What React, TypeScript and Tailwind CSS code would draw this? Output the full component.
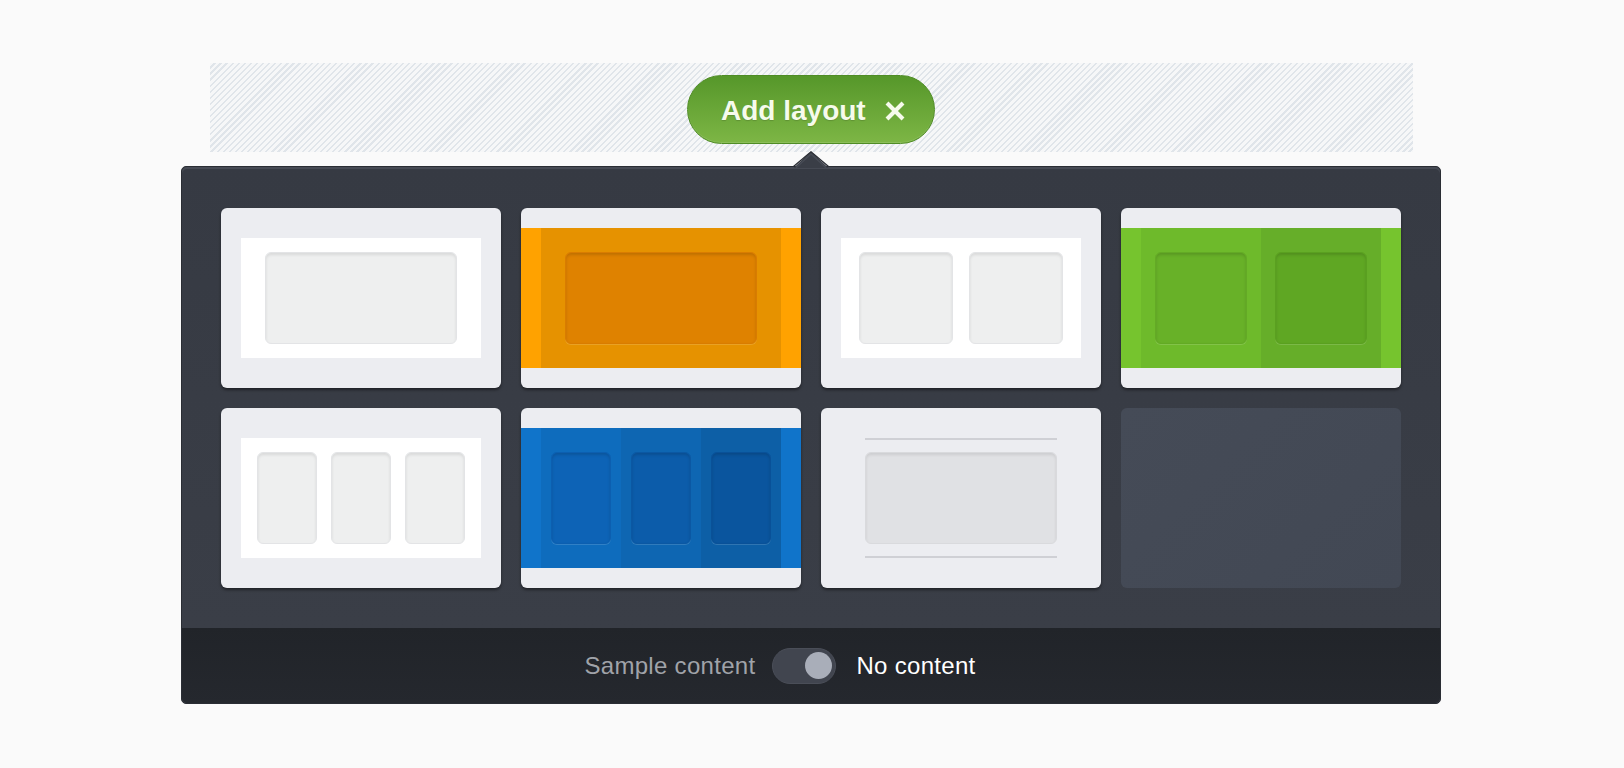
import React from "react";

const cardBase =
  "h-[180px] rounded-[6px] bg-[#ecedf1] overflow-hidden shadow-[0_2px_3px_rgba(0,0,0,0.45)]";

const whiteBox =
  "rounded-[6px] bg-[#eeefef] border border-[#e3e4e6] shadow-[inset_0_2px_3px_rgba(0,0,0,0.09)]";

function SingleWhite() {
  return (
    <div className={cardBase + " pt-[30px] px-5"}>
      <div className="h-[120px] bg-white px-[24px] py-[14px] flex">
        <div className={whiteBox + " flex-1"} />
      </div>
    </div>
  );
}

function TwoWhite() {
  return (
    <div className={cardBase + " pt-[30px] px-5"}>
      <div className="h-[120px] bg-white px-[18px] py-[14px] flex gap-[16px]">
        <div className={whiteBox + " flex-1"} />
        <div className={whiteBox + " flex-1"} />
      </div>
    </div>
  );
}

function ThreeWhite() {
  return (
    <div className={cardBase + " pt-[30px] px-5"}>
      <div className="h-[120px] bg-white px-[16px] py-[14px] flex gap-[14px]">
        <div className={whiteBox + " flex-1"} />
        <div className={whiteBox + " flex-1"} />
        <div className={whiteBox + " flex-1"} />
      </div>
    </div>
  );
}

const colorBox =
  "flex-1 rounded-[6px] shadow-[inset_0_2px_3px_rgba(0,0,0,0.14),0_1px_0_rgba(255,255,255,0.14)]";

function Orange() {
  return (
    <div className={cardBase + " pt-5"}>
      <div className="h-[140px] bg-[#ffa200] px-5 flex">
        <div className="flex-1 bg-[#e69200] px-[24px] py-[24px] flex">
          <div className={colorBox + " bg-[#df8200] border border-[#d97c00]"} />
        </div>
      </div>
    </div>
  );
}

function Green() {
  return (
    <div className={cardBase + " pt-5"}>
      <div className="h-[140px] bg-[#76c42e] px-5 flex">
        <div className="flex-1 bg-[#6eba2b] px-[14px] py-[24px] flex">
          <div className={colorBox + " bg-[#68b128] border border-[#63aa25]"} />
        </div>
        <div className="flex-1 bg-[#66ae29] px-[14px] py-[24px] flex">
          <div className={colorBox + " bg-[#5fa723] border border-[#5aa020]"} />
        </div>
      </div>
    </div>
  );
}

function Blue() {
  return (
    <div className={cardBase + " pt-5"}>
      <div className="h-[140px] bg-[#1074ca] px-5 flex">
        <div className="flex-1 bg-[#0e6cbd] px-[10px] py-[24px] flex">
          <div className={colorBox + " bg-[#0d63b6] border border-[#0c5fb0]"} />
        </div>
        <div className="flex-1 bg-[#0e66b2] px-[10px] py-[24px] flex">
          <div className={colorBox + " bg-[#0c5caa] border border-[#0b58a3]"} />
        </div>
        <div className="flex-1 bg-[#0d5fa6] px-[10px] py-[24px] flex">
          <div className={colorBox + " bg-[#0a559e] border border-[#095198]"} />
        </div>
      </div>
    </div>
  );
}

function Lines() {
  return (
    <div className={cardBase + " pt-[30px] px-[44px] flex flex-col"}>
      <div className="h-[2px] bg-[#cfd0d5]" />
      <div className="mt-[12px] h-[92px] rounded-[6px] bg-[#e0e1e4] border border-[#d9dadd] shadow-[inset_0_2px_3px_rgba(0,0,0,0.09)]" />
      <div className="mt-[12px] h-[2px] bg-[#cfd0d5]" />
    </div>
  );
}

function Empty() {
  return <div className="h-[180px] rounded-[6px] bg-[linear-gradient(135deg,#454b57,#424854)]" />;
}

export default function App() {
  return (
    <div className="min-h-screen bg-[#fafafa] flex flex-col items-center pt-[63px] pr-[2px] font-['Liberation_Sans',Arial,sans-serif]">
      <div className="w-[1203px] h-[89px] flex justify-center pt-[12px] bg-[repeating-linear-gradient(135deg,#f6f7f8_0px,#f6f7f8_2.7px,#e0e5ea_2.7px,#e0e5ea_4.3px)]">
        <button className="h-[69px] w-[248px] rounded-full border border-[#4f8c25] bg-[linear-gradient(180deg,#56972a,#7db645)] shadow-[inset_0_-1px_0_rgba(255,255,255,0.12)] flex items-center pl-[33px]">
          <span className="text-[28px] leading-none font-bold text-[#f6fbec] [text-shadow:0_1px_1px_rgba(0,0,0,0.15)] mt-[3px]">
            Add layout
          </span>
          <svg className="ml-[19px] mt-[2px]" width="20" height="20" viewBox="0 0 20 20">
            <line x1="2" y1="2" x2="18" y2="18" stroke="#f6fbec" strokeWidth="4" />
            <line x1="18" y1="2" x2="2" y2="18" stroke="#f6fbec" strokeWidth="4" />
          </svg>
        </button>
      </div>

      <div className="relative mt-[14px] w-[1260px] rounded-[5px] border border-[#2a2d34] bg-[#363a43] overflow-visible">
        <svg className="absolute left-[611px] top-[-16px]" width="36" height="18" viewBox="0 0 36 18">
          <polygon points="0.5,17 18,0.8 35.5,17" fill="#3a3e47" />
          <polyline points="0.5,15.5 18,0.8 35.5,15.5" fill="none" stroke="#2a2d34" strokeWidth="1.3" />
          <polyline points="3,16.8 18,3 33,16.8" fill="none" stroke="#474b55" strokeWidth="1.5" />
        </svg>
        <div className="rounded-t-[5px] bg-[linear-gradient(180deg,#363a43,#3a3e47)] shadow-[inset_0_2px_0_#464a54] pt-[41px] pb-[40px] px-[39px]">
          <div className="grid grid-cols-4 gap-5">
            <SingleWhite />
            <Orange />
            <TwoWhite />
            <Green />
            <ThreeWhite />
            <Blue />
            <Lines />
            <Empty />
          </div>
        </div>
        <div className="h-[75px] rounded-b-[5px] bg-[linear-gradient(180deg,#212429,#25282e)] flex items-center justify-center pr-[62px]">
          <span className="text-[24px] tracking-[0.3px] text-[#a0a3a9]">Sample content</span>
          <div className="ml-[17px] w-[64px] h-[36px] rounded-full bg-[#41454f] border border-[#4a4e58] flex items-center justify-end pr-[3px]">
            <div className="w-[27px] h-[27px] rounded-full bg-[#a9aeb9]" />
          </div>
          <span className="ml-[20px] text-[24px] tracking-[0.3px] text-white">No content</span>
        </div>
      </div>
    </div>
  );
}
